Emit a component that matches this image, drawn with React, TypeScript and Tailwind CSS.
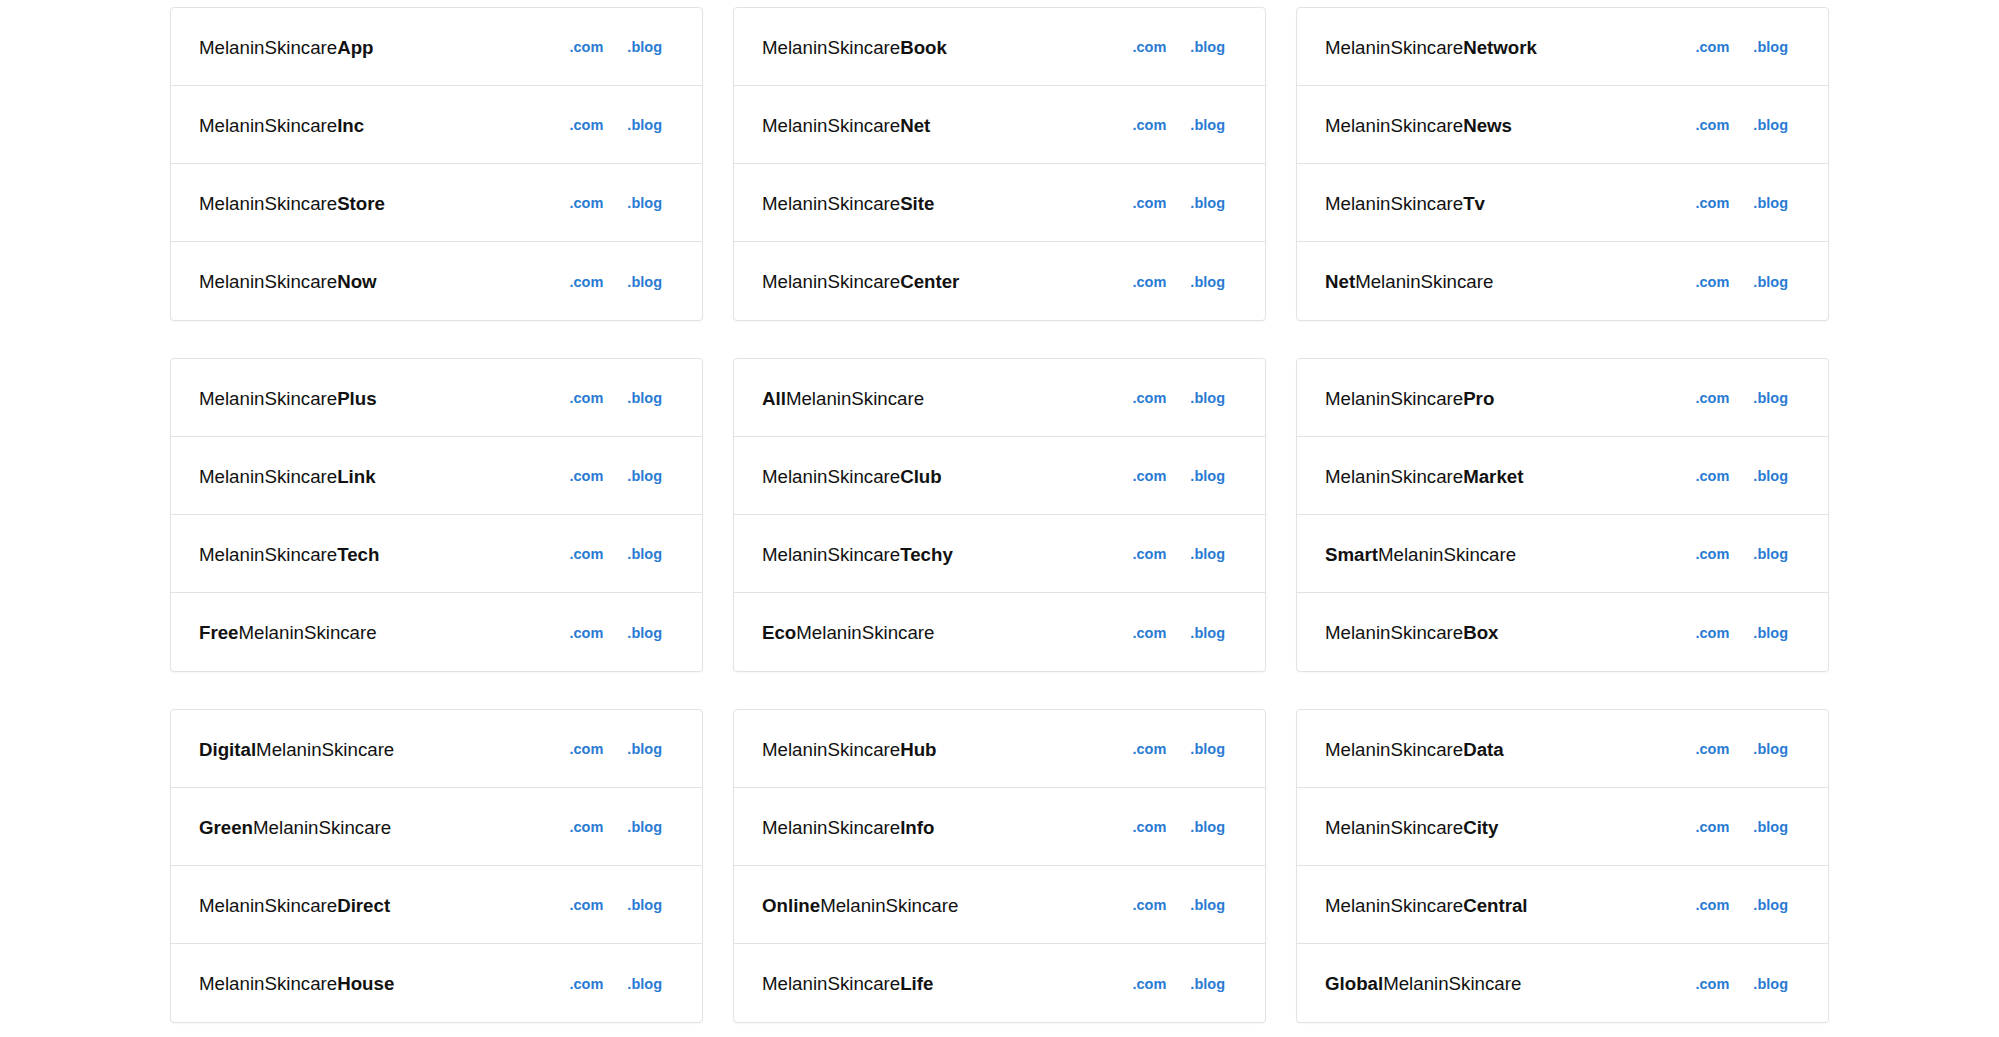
import React from 'react';

type Name = { affix: string; prefix?: boolean };

const groups: Name[][][] = [
    [
        [{ affix: 'App' }, { affix: 'Inc' }, { affix: 'Store' }, { affix: 'Now' }],
        [{ affix: 'Book' }, { affix: 'Net' }, { affix: 'Site' }, { affix: 'Center' }],
        [{ affix: 'Network' }, { affix: 'News' }, { affix: 'Tv' }, { affix: 'Net', prefix: true }],
    ],
    [
        [{ affix: 'Plus' }, { affix: 'Link' }, { affix: 'Tech' }, { affix: 'Free', prefix: true }],
        [{ affix: 'All', prefix: true }, { affix: 'Club' }, { affix: 'Techy' }, { affix: 'Eco', prefix: true }],
        [{ affix: 'Pro' }, { affix: 'Market' }, { affix: 'Smart', prefix: true }, { affix: 'Box' }],
    ],
    [
        [{ affix: 'Digital', prefix: true }, { affix: 'Green', prefix: true }, { affix: 'Direct' }, { affix: 'House' }],
        [{ affix: 'Hub' }, { affix: 'Info' }, { affix: 'Online', prefix: true }, { affix: 'Life' }],
        [{ affix: 'Data' }, { affix: 'City' }, { affix: 'Central' }, { affix: 'Global', prefix: true }],
    ],
];

const BASE = 'MelaninSkincare';

const DomainRow: React.FC<{ name: Name; last: boolean }> = ({ name, last }) => (
    <div className={`flex items-center justify-between pt-[3px] pl-[28px] pr-[40px] ${last ? 'h-[78px]' : 'h-[78px] border-b border-[#e3e3e3]'}`}>
        <span className="text-[18.7px] text-[#111]">
            {name.prefix ? (
                <>
                    <b className="font-bold">{name.affix}</b>{BASE}
                </>
            ) : (
                <>
                    {BASE}<b className="font-bold">{name.affix}</b>
                </>
            )}
        </span>
        <div className="flex items-center gap-[24px] text-[14.5px] font-bold text-[#2a7bd3]">
            <a href="#">.com</a>
            <a href="#">.blog</a>
        </div>
    </div>
);

export default function App() {
    return (
        <div className="min-h-screen bg-white pt-[7px] font-['Liberation_Sans',Arial,sans-serif]">
            <div className="w-[1659px] mx-auto flex flex-col gap-[37px]">
                {groups.map((group, gi) => (
                    <div key={gi} className="grid grid-cols-3 gap-[30px]">
                        {group.map((card, ci) => (
                            <div key={ci} className="border border-[#e3e3e3] rounded-[4px] bg-white shadow-[0_1px_2px_rgba(0,0,0,0.04)]">
                                {card.map((name, ri) => (
                                    <DomainRow key={ri} name={name} last={ri === card.length - 1} />
                                ))}
                            </div>
                        ))}
                    </div>
                ))}
            </div>
        </div>
    );
}
